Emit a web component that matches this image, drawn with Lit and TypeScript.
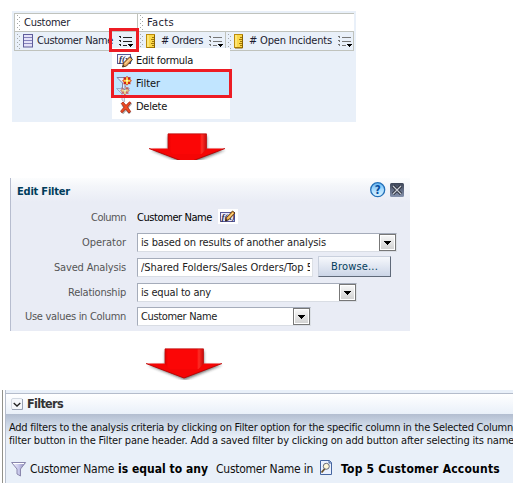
import { LitElement, html, svg, css } from "lit";
import { customElement, property } from "lit/decorators.js";

/** A single line of text tracked so that it spans a given width. */
@customElement("fit-text")
class FitText extends LitElement {
  @property() text = "";
  @property({ type: Number }) span = 0;
  static styles = css`
    :host { display: inline-block; white-space: pre; flex: none; }
    span { display: inline-block; }
  `;
  updated() {
    const el = this.renderRoot.querySelector("span") as HTMLElement;
    el.style.letterSpacing = "0px";
    const w = el.getBoundingClientRect().width;
    if (this.span && w) {
      el.style.letterSpacing = (this.span - w) / this.text.length + "px";
      this.style.width = this.span + "px";
    }
  }
  render() {
    return html`<span>${this.text}</span>`;
  }
}

const t = (text: string, span: number, cls = "") =>
  html`<fit-text class=${cls} .text=${text} .span=${span}></fit-text>`;

const grip = html`<svg class="grip" width="4" height="15" viewBox="0 0 4 15" shape-rendering="crispEdges">
  ${[0, 2, 4, 6, 8, 10, 12, 14].map((y) => svg`<path d="M${(y / 2) % 2 ? 2 : 0} ${y}h1v1h-1z" fill="#a4a8a8"/>`)}
</svg>`;

const columnIcon = html`<svg width="10" height="14" viewBox="0 0 10 14">
  <rect x=".5" y=".5" width="9" height="12.5" fill="#e4e2f8" stroke="#5f5d9b"/>
  <path d="M1 3.5h8M1 6.5h8M1 9.5h8" stroke="#8583bd"/>
</svg>`;

const rulerIcon = html`<svg width="9" height="15" viewBox="0 0 9 15">
  <rect x=".5" y=".5" width="8" height="13" fill="#fbd84a" stroke="#bd8b09"/>
  <path d="M2 1v12" stroke="#fff2a4"/><path d="M8.5 1v13H1" fill="none" stroke="#8d6400"/>
  <path d="M6 3.500h2M5 5.500h3M6 7.500h2M5 9.500h3M6 11.500h2" stroke="#a1770a"/>
</svg>`;

const listIcon = (c: string) => html`<svg width="14" height="13" viewBox="0 0 14 13" shape-rendering="crispEdges">
  <path d="M0 1h2v1h-2zM1 2h1v1h-1zM0 5h2v1h-2zM1 6h1v1h-1zM0 9h2v1h-2zM1 10h1v1h-1zM4 2h9v1h-9zM4 6h9v1h-9zM4 10h4v1h-4z" fill=${c}/>
  <path d="M9 9h5v1h-1v1h-1v1h-1v-1h-1v-1h-1z" fill="#000"/>
</svg>`;

const formulaIcon = html`<svg width="16" height="15" viewBox="0 0 16 15">
  <rect x=".5" y="1.500" width="13" height="9" fill="#f5f6ff" stroke="#595b94"/>
  <text x="2" y="9" font-family="Liberation Serif, serif" font-size="9" font-style="italic" font-weight="bold" fill="#2d2d4c">f(x)</text>
  <path d="M5.500 14l1-4 6-6 3 2.500-6 6.500z" fill="#e3a45b" stroke="#5b3612" stroke-width=".9"/>
  <path d="M8 11l5.500-5.500" stroke="#ffd795" stroke-width="1.200"/><path d="M5.500 14l.6-2 1.300 1z" fill="#222"/>
</svg>`;

const formulaSmallIcon = html`<svg width="16" height="13" viewBox="0 0 16 13">
  <rect x=".5" y="2.500" width="14" height="9" fill="#e9e9ff" stroke="#575797"/>
  <text x="1.500" y="10" font-family="Liberation Serif, serif" font-size="9" font-style="italic" font-weight="bold" fill="#2d2d4c">f(x)</text>
  <path d="M5.500 11l1-3.500L12.500 1 15 3 9 9.600z" fill="#e3a241" stroke="#57330d" stroke-width=".9"/>
  <path d="M8 8.600l5-5.600" stroke="#ffdf96"/><path d="M5.300 11.300l.8-2.200 1.600 1.200z" fill="#222"/>
</svg>`;

const star = (x: number, y: number, o: number) => svg`<g transform="translate(${x} ${y})" opacity=${o}>
  <path d="M0-4.800L1.500-3.300 3.500-3.500 3.300-1.500 4.800 0 3.300 1.500 3.500 3.500 1.500 3.300 0 4.800-1.500 3.300-3.500 3.500-3.300 1.500-4.800 0-3.300-1.500-3.500-3.500-1.500-3.300z" fill="#cf2414"/>
  <path d="M0-3.500V3.500M-3.500 0H3.500" stroke="#ffd347" stroke-width="2"/><circle r="1" fill="#fff8cf"/></g>`;

const newFilterIcon = html`<svg width="16" height="27" viewBox="0 0 16 27">
  <g opacity=".5"><path d="M.5 12.500h13l-5 5.500v8l-2.500-2v-6z" fill="#d6dcf0" stroke="#767e9e"/></g>
  ${star(9, 14.5, 0.6)}
  <path d="M1 1.500h13L9 7v7L6.500 12V7z" fill="#e5e9f7" stroke="#8085a6"/>
  ${star(11, 4.8, 1)}
</svg>`;

const deleteIcon = html`<svg width="12" height="13" viewBox="0 0 12 13">
  <path d="M2 3L9.5 11.5M10.5 1L1.5 11.5" stroke="#777" stroke-width="3" transform="translate(.6 .8)" opacity=".6"/>
  <path d="M1.2 2.6L3 1l3 3.3L9.5.8l1.3 1.1L7.6 6l3 4.4L9 12 5.6 8 2 11.8.6 10.2 4.2 6z" fill="#ee4a22" stroke="#a52310" stroke-width=".8"/>
</svg>`;

const arrow = (h: number, id: string) => html`<svg width="82" height=${h} viewBox="0 0 82 ${h}">
  <defs>
    <linearGradient id="g${id}"><stop offset="0" stop-color="#e00000"/><stop offset=".08" stop-color="#fb0606"/><stop offset=".83" stop-color="#fb0606"/><stop offset=".88" stop-color="#ff2d25"/><stop offset="1" stop-color="#c80909"/></linearGradient>
    <filter id="s${id}" x="-20%" y="-20%" width="140%" height="160%"><feGaussianBlur stdDeviation="1.5"/></filter>
  </defs>
  <path d="M20 3h39v14h18L40 32 3 17h17z" fill="#222" opacity=".65" filter="url(#s${id})"/>
  <path d="M1 15.500h76L39 30z" fill="#f50505"/>
  <path d="M1 15.500L39 30 77 15.500" fill="none" stroke="#b80000" stroke-width=".9"/>
  <path d="M20 .7h38.500V16l-5 5H25l-5-5z" fill="url(#g${id})"/>
  <path d="M20 15.500V.9h38.500v14.600" fill="none" stroke="#bd1010" stroke-width=".8"/>
</svg>`;

const helpIcon = html`<svg width="16" height="16" viewBox="0 0 16 16">
  <defs><linearGradient id="h" x2="0" y2="1"><stop offset="0" stop-color="#66b6f4"/><stop offset=".5" stop-color="#a9dcff"/><stop offset="1" stop-color="#dff5ff"/></linearGradient></defs>
  <circle cx="7.700" cy="7.700" r="7" fill="url(#h)" stroke="#2370b8" stroke-width="1.300"/>
  <text x="7.800" y="12" text-anchor="middle" font-family="DejaVu Sans, sans-serif" font-size="11.500" font-weight="bold" fill="#074d9e">?</text>
</svg>`;

const closeIcon = html`<svg width="14" height="14" viewBox="0 0 14 14">
  <defs><linearGradient id="c" x2="0" y2="1"><stop offset="0" stop-color="#3c4456"/><stop offset="1" stop-color="#8592ae"/></linearGradient></defs>
  <rect width="14" height="14" rx="1.500" fill="url(#c)"/>
  <path d="M3 3l8 8M11 3l-8 8" stroke="#20242e" stroke-width="3"/>
  <path d="M3 3l8 8M11 3l-8 8" stroke="#c9ced8" stroke-width="1.300"/>
</svg>`;

const chevronIcon = html`<svg width="12" height="12" viewBox="0 0 12 12">
  <rect x=".5" y=".5" width="11" height="11" rx="1.500" fill="#f4f7fb" stroke="#d3d9e2"/>
  <path d="M1 11.500h10.500V1" fill="none" stroke="#98a2b4"/>
  <path d="M2.700 5L6 8l3.300-3" fill="none" stroke="#222" stroke-width="1.300"/>
</svg>`;

const funnelIcon = html`<svg width="16" height="16" viewBox="0 0 16 16">
  <defs><linearGradient id="f"><stop offset="0" stop-color="#f7f7ff"/><stop offset=".5" stop-color="#c9c9ec"/><stop offset="1" stop-color="#8582b2"/></linearGradient></defs>
  <path d="M.6 1.500h14L9.500 8v7L6 13V8z" fill="url(#f)" stroke="#8a87ad"/>
  <path d="M2 2.500h11" stroke="#fff"/>
</svg>`;

const analysisIcon = html`<svg width="12" height="15" viewBox="0 0 12 15">
  <path d="M.5.5h9l2 2v12H.5z" fill="#eaf1ff" stroke="#4565a0"/><path d="M9 .5V3h2.500" fill="#b9cbea" stroke="#4565a0"/>
  <path d="M5 8.500L1.500 12.500" stroke="#695027" stroke-width="1.800"/>
  <circle cx="6.300" cy="6.300" r="3" fill="#fff7d7" stroke="#666b78" stroke-width="1"/>
</svg>`;

const select = (text: string, span: number, width: number) => html`
  <div class="field" style="width:${width}px">
    ${t(text, span)}
    <span class="drop"><svg width="7" height="4" viewBox="0 0 7 4" shape-rendering="crispEdges"><path d="M0 0h7v1h-1v1h-1v1h-1v1h-1v-1h-1v-1h-1v-1h-1z"/></svg></span>
  </div>`;

const row = (label: string, span: number, height: number, content: unknown) => html`
  <div class="row" style="height:${height}px"><div class="label">${t(label, span)}</div>${content}</div>`;

@customElement("app-root")
class AppRoot extends LitElement {
  static styles = css`
    * { box-sizing: border-box; }
    :host {
      display: block; width: 522px; height: 503px; overflow: hidden; background: #fff; color: #111;
      font: 11px/14px "DejaVu Sans Condensed", "DejaVu Sans", sans-serif; font-stretch: condensed;
    }
    svg { display: block; flex: none; }
    .criteria { position: relative; width: 344px; height: 111px; margin: 11px 0 0 12px; padding: 2px; background: #e9f0f9; }
    .table { display: grid; grid-template-columns: 122px 217px; width: 340px; border: 1px solid #c0c3bd; color: #1c1c30; }
    .head { display: flex; align-items: center; height: 18px; background: #fff; border-bottom: 1px solid #c0c3bd; padding-left: 2px; gap: 3px; }
    .head + .head, .cells + .cells { border-left: 1px solid #c0c3bd; }
    .cells { display: flex; height: 18px; }
    .cell { display: flex; align-items: center; padding-left: 2px; }
    .cell.wide { width: 88px; border-right: 1px solid #c0c3bd; }
    .cell .grip { margin-right: 2px; }
    .cell fit-text { margin: 0 6px 0 4px; }
    .measure fit-text { margin: 0 6px 0 6px; }
    .menu { position: absolute; left: 100px; top: 37px; width: 118px; height: 71px; background: #fff; }
    .item { display: flex; height: 23px; align-items: center; padding: 1px 0 0 24px; }
    .item:first-child { height: 24px; padding-top: 2px; }
    .item.on { background: #c1e5ff; }
    .mark { position: absolute; border: 3px solid #ed1c24; }
    .mark.button { left: 97px; top: 17px; width: 30px; height: 24px; }
    .mark.filter { left: 99px; top: 58px; width: 121px; height: 29px; }
    .glyph { position: absolute; }
    .edit { left: 5px; top: 5px; }
    .new { left: 4px; top: 28px; }
    .del { left: 8px; top: 53px; }
    .one { margin: 11px 0 0 148px; }
    .two { margin: 17px 0 0 145px; }
    .dialog { width: 400px; height: 153px; margin: 18px 0 0 10px; border-left: 1px solid #b7bdcf; background: linear-gradient(#fcfdfe 0, #f4f6fa 8px, #e9ecf5 24px); color: #222; }
    .title { display: flex; align-items: center; height: 25px; padding: 0 6px 0 6px; gap: 4px; color: #003d5b; font-weight: bold; }
    .title svg { margin-top: -1px; }
    .title fit-text { margin: 2px auto 0 0; }
    .row { display: flex; align-items: center; }
    .label { width: 115px; margin: 1px 11px 0 0; text-align: right; color: #555; }
    .first { display: flex; align-items: center; gap: 6px; color: #000; }
    .first fit-text { margin-top: 1px; }
    .white { background: #fff; padding: 1px 2px; margin-top: -1px; }
    .field { display: flex; align-items: center; height: 19px; padding-left: 3px; background: #fff; border: 1px solid #a5acba; border-right-color: #dce0e6; border-bottom-color: #d9dde4; overflow: hidden; }
    .field > fit-text { margin: 1px auto 0 0; }
    .drop { display: flex; flex: none; align-items: center; justify-content: center; width: 17px; height: 17px; border: 1px solid #777; background: linear-gradient(#f9f9f9, #d0d0d0); box-shadow: inset 0 0 0 1px #fff; padding-top: 2px; }
    .browse { display: flex; align-items: center; justify-content: center; width: 73px; height: 21px; margin: -1px 0 0 5px; padding-top: 1px; color: #033d5c; background: linear-gradient(#f6f8fc, #cbd5e7); border: 1px solid #c9d0dd; border-right-color: #5f6979; border-bottom-color: #5f6979; }
    .clip { width: 176px; }
    .clip > div { overflow: hidden; width: 169px; height: 14px; margin-top: 1px; }
    .pane { width: 511px; height: 93px; margin: 10px 0 0 2px; padding-left: 2px; border-left: 1px solid #92928b; background: #fff; overflow: hidden; }
    .inner { height: 93px; border-left: 1px solid #b6bdcb; padding-top: 3px; background: #e9f0f9; }
    .bar { display: flex; align-items: center; gap: 4px; height: 21px; padding-left: 5px; border-top: 1px solid #b4bccb; background: linear-gradient(#fff, #e9f0f9); font-size: 12.5px; font-weight: bold; color: #333; }
    .body { height: 69px; padding: 7px 0 0 3px; background: linear-gradient(#b2bdd0 0, #ccd7e6 10px, #e9f0f9 24px); line-height: 13px; color: #111; }
    .body > fit-text { display: block; height: 13px; }
    .rule { display: flex; align-items: center; gap: 4px; margin: 13px 0 0 2px; height: 18px; font-size: 12px; color: #111; }
    .rule .next { margin-left: 4px; }
    .rule svg { margin-right: -1px; }
    .rule .name + svg { margin: -4px 5px 0 3px; }
    .bold { font-weight: bold; color: #000; }
  `;

  render() {
    return html`
      <div class="criteria">
        <div class="table">
          <div class="head">${grip}${t("Customer", 46)}</div>
          <div class="head">${grip}${t("Facts", 27)}</div>
          <div class="cells"><div class="cell">${grip}${columnIcon}${t("Customer Name", 76)}${listIcon("#222")}</div></div>
          <div class="cells measure">
            <div class="cell wide">${grip}${rulerIcon}${t("# Orders", 42)}${listIcon("#777")}</div>
            <div class="cell">${grip}${rulerIcon}${t("# Open Incidents", 83)}${listIcon("#777")}</div>
          </div>
        </div>
        <div class="menu">
          <div class="item">${t("Edit formula", 57)}</div>
          <div class="item on">${t("Filter", 24)}</div>
          <div class="item">${t("Delete", 31)}</div>
          <div class="glyph edit">${formulaIcon}</div>
          <div class="glyph new">${newFilterIcon}</div>
          <div class="glyph del">${deleteIcon}</div>
        </div>
        <div class="mark button"></div>
        <div class="mark filter"></div>
      </div>

      <div class="one">${arrow(27, "1")}</div>

      <div class="dialog">
        <div class="title">${t("Edit Filter", 53)}${helpIcon}${closeIcon}</div>
        ${row("Column", 35, 28, html`<div class="first">${t("Customer Name", 75)}<span class="white">${formulaSmallIcon}</span></div>`)}
        ${row("Operator", 44, 22, select("is based on results of another analysis", 185, 260))}
        ${row("Saved Analysis", 72, 28, html`<div class="field clip"><div>${t("/Shared Folders/Sales Orders/Top 5", 172)}</div></div><div class="browse">${t("Browse...", 47)}</div>`)}
        ${row("Relationship", 58, 22, select("is equal to any", 70, 220))}
        ${row("Use values in Column", 101, 26, select("Customer Name", 76, 174))}
      </div>

      <div class="two">${arrow(32, "2")}</div>

      <div class="pane"><div class="inner">
        <div class="bar">${chevronIcon}${t("Filters", 36)}</div>
        <div class="body">
          ${t("Add filters to the analysis criteria by clicking on Filter option for the specific column in the Selected Column", 504)}
          ${t("filter button in the Filter pane header. Add a saved filter by clicking on add button after selecting its name", 505)}
          <div class="rule">
            ${funnelIcon}${t("Customer Name", 84)}${t("is equal to any", 90, "bold")}${t("Customer Name in", 97, "next name")}${analysisIcon}${t("Top 5 Customer Accounts", 159, "bold")}
          </div>
        </div>
      </div></div>
    `;
  }
}
